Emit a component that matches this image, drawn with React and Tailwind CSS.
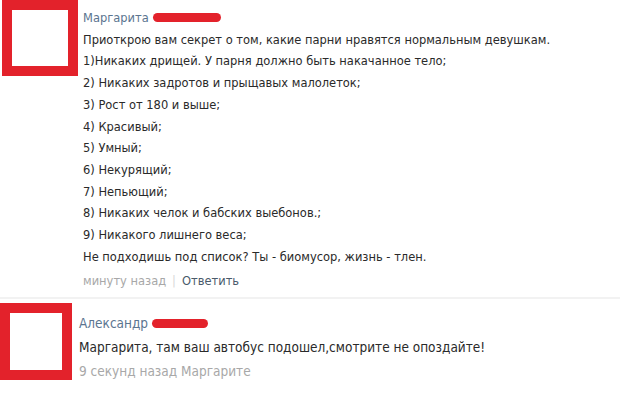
import React from "react";

const font = { fontFamily: '"DejaVu Sans Condensed", "DejaVu Sans", sans-serif' };

function Scribble({ w }) {
  return (
    <span
      className="inline-block h-[9px] rounded-full bg-[#e3222b] align-middle ml-[4px]"
      style={{ width: w }}
    />
  );
}

export default function App() {
  const lines1 = [
    "Приоткрою вам секрет о том, какие парни нравятся нормальным девушкам.",
    "1)Никаких дрищей. У парня должно быть накачанное тело;",
    "2) Никаких задротов и прыщавых малолеток;",
    "3) Рост от 180 и выше;",
    "4) Красивый;",
    "5) Умный;",
    "6) Некурящий;",
    "7) Непьющий;",
    "8) Никаких челок и бабских выебонов.;",
    "9) Никакого лишнего веса;",
    "Не подходишь под список? Ты - биомусор, жизнь - тлен.",
  ];
  return (
    <div className="w-[620px] h-[415px] bg-white overflow-hidden text-[#2a2a2a]" style={font}>
      <div className="flex">
        <div className="ml-[2px] w-[76px] h-[76px] border-[10px] border-[#e3222b] bg-white shrink-0" />
        <div className="ml-[5px] pt-[7px] leading-[21.7px] text-[12.75px]">
          <div className="text-[#5b7590] flex items-center">
            <span>Маргарита</span>
            <Scribble w={68} />
          </div>
          {lines1.map((l, i) => (
            <div key={i} className="whitespace-nowrap">{l}</div>
          ))}
          <div className="whitespace-nowrap pt-[3px]">
            <span className="text-[#a8a8a8]">минуту назад</span>
            <span className="text-[#d8d8d8] mx-[6px]">|</span>
            <span className="text-[#4a5a6b]">Ответить</span>
          </div>
        </div>
      </div>
      <div className="mt-[5px] h-[2px] bg-[#f2f2f2]" />
      <div className="flex mt-[4px]">
        <div className="w-[72px] h-[77px] border-[10px] border-[#e3222b] bg-white shrink-0" />
        <div className="ml-[7px] pt-[8px] leading-[24px] text-[13.5px]">
          <div className="text-[#5b7590] flex items-center">
            <span>Александр</span>
            <Scribble w={56} />
          </div>
          <div className="whitespace-nowrap">Маргарита, там ваш автобус подошел,смотрите не опоздайте!</div>
          <div className="whitespace-nowrap text-[#a8a8a8]">9 секунд назад Маргарите</div>
        </div>
      </div>
    </div>
  );
}
